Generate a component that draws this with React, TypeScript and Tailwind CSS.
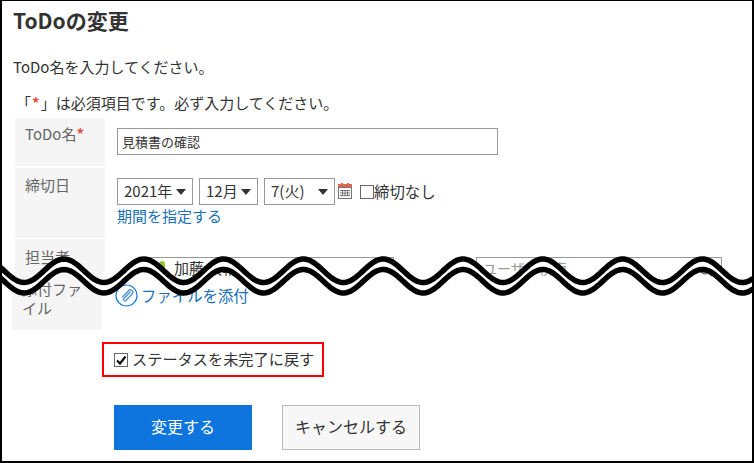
import React from "react";

const font = '"Noto Sans CJK JP", "Liberation Sans", sans-serif';

// one wave as a list of points, peaks every 79.8px starting from x=64
function wavePoints(peakY: number) {
    const amp = 11.75;
    const points: string[] = [];
    for (let x = -4; x <= 758; x += 2) {
        const y = peakY + amp - amp * Math.cos((2 * Math.PI * (x - 64)) / 79.8);
        points.push(`${x} ${y.toFixed(2)}`);
    }
    return points;
}

function WaveCut() {
    const upper = wavePoints(259);
    const lower = wavePoints(269.5);
    const band = [...upper, ...[...lower].reverse()];
    return (
        <svg className="absolute left-0 top-0" width="754" height="463" viewBox="0 0 754 463" fill="none">
            <path d={`M${band.join("L")}Z`} fill="#fff" />
            <path d={`M${upper.join("L")}`} stroke="#000" strokeWidth="5.5" />
            <path d={`M${lower.join("L")}`} stroke="#000" strokeWidth="5.5" />
        </svg>
    );
}

function Select({ label, width }: { label: string; width: string }) {
    return (
        <div className={`${width} flex h-[27px] items-center justify-between border border-[#999] px-[6px] text-[15px] text-[#333]`}>
            <span>{label}</span>
            <svg width="10" height="6" viewBox="0 0 10 6">
                <path d="M0 0h10L5 6z" fill="#333" />
            </svg>
        </div>
    );
}

function Label({ children, className }: { children: React.ReactNode; className: string }) {
    return (
        <div className={`w-[90px] shrink-0 bg-[#f5f5f5] text-[15px] text-[#666] ${className}`}>
            {children}
        </div>
    );
}

export default function App() {
    return (
        <div
            className="relative h-[463px] w-[754px] overflow-hidden border-t border-l-2 border-r-2 border-b-2 border-black bg-white"
            style={{ fontFamily: font }}
        >
            <h1 className="pl-[11px] pt-[6px] text-[21px] font-bold leading-[26px] text-[#333]">
                ToDoの変更
            </h1>
            <p className="mt-[24px] pl-[11px] text-[15px] leading-[20px] text-[#333]">
                ToDo名を入力してください。
            </p>
            <p className="mt-[16px] pl-[14px] text-[15px] leading-[20px] text-[#333]">
                「<span className="px-[1px] font-bold text-[#e5503c]">*</span>」は必須項目です。必ず入力してください。
            </p>

            <div className="mt-[5px] flex flex-col">
                {/* ToDo name */}
                <div className="ml-[13px] flex h-[48px]">
                    <Label className="px-[10px] pt-[6px] leading-[20px]">
                        ToDo名<span className="font-bold text-[#e5503c]">*</span>
                    </Label>
                    <div className="pl-[12px] pt-[10px]">
                        <div className="flex h-[27px] w-[381px] items-center border border-[#999] px-[4px] text-[13px] text-[#333]">
                            見積書の確認
                        </div>
                    </div>
                </div>

                {/* Deadline */}
                <div className="ml-[13px] mt-[2px] flex h-[70px]">
                    <Label className="px-[10px] pt-[7px] leading-[20px]">締切日</Label>
                    <div className="pl-[12px] pt-[10px]">
                        <div className="flex items-center">
                            <Select label="2021年" width="w-[76px]" />
                            <div className="w-[6px]" />
                            <Select label="12月" width="w-[59px]" />
                            <div className="w-[6px]" />
                            <Select label="7(火)" width="w-[71px]" />
                            <svg className="mb-[2px] ml-[3px]" width="14" height="16" viewBox="0 0 14 16">
                                <path d="M3 0h2v2H3zM9 0h2v2H9z" fill="#e8604c" />
                                <rect x="0" y="1" width="14" height="4" fill="#e8604c" />
                                <rect x="0.5" y="4.5" width="13" height="11" fill="#fff" stroke="#777" />
                                <path d="M2 7.5h10M2 10h10M2 12.5h10M4.5 7v6M7 7v6M9.5 7v6" stroke="#777" />
                            </svg>
                            <span className="ml-[8px] h-[14px] w-[14px] border border-[#666] bg-white" />
                            <span className="text-[15.4px] text-[#333]">締切なし</span>
                        </div>
                        <div className="mt-[1px] text-[15px] leading-[20px] text-[#1a6fb5]">期間を指定する</div>
                    </div>
                </div>

                {/* Assignee, cut off by the wave */}
                <div className="ml-[13px] mt-[1px] flex h-[33px]">
                    <Label className="px-[10px] pt-[8px] leading-[20px]">担当者</Label>
                    <div className="ml-[43px] mt-[18px] flex h-[15px] w-[246px] border border-b-0 border-[#999] pl-[10px] text-[15px] leading-[20px] text-[#333]">
                        <span className="mr-[9px] mt-[3px] h-[12px] w-[6px] rounded-sm bg-[#8ac832]" />
                        加藤 大輔
                    </div>
                    <div className="ml-[82px] mt-[18px] flex h-[15px] w-[246px] justify-between border border-b-0 border-[#999] pl-[6px] pr-[8px] text-[14px] leading-[20px] text-[#999]">
                        ユーザー検索
                        <svg className="mt-[5px]" width="14" height="14" viewBox="0 0 14 14" fill="none" stroke="#777" strokeWidth="2">
                            <circle cx="6" cy="6" r="4.5" />
                            <path d="M9.5 9.5 13 13" />
                        </svg>
                    </div>
                </div>

                {/* Attachment */}
                <div className="ml-[10px] flex h-[58px]">
                    <Label className="px-[10px] pt-[7px] leading-[19px]">添付ファイル</Label>
                    <div className="flex items-start pl-[13px] pt-[12px] text-[15.4px] leading-[22px] text-[#1a6fb5]">
                        <svg className="mr-[3px]" width="23" height="23" viewBox="0 0 23 23" fill="none">
                            <circle cx="11.5" cy="11.5" r="10.5" stroke="#1a7fe0" strokeWidth="1.2" />
                            <path
                                d="M15.5 7.5 9 14.5c-1.4 1.6.7 3.4 2 2l6-6.5c2.4-2.7-1.2-5.8-3.5-3.3L7 13.6"
                                stroke="#4a90d0"
                                strokeWidth="1.3"
                            />
                        </svg>
                        ファイルを添付
                    </div>
                </div>
            </div>

            {/* Status checkbox, highlighted */}
            <div className="ml-[100px] mt-[12px] flex h-[35px] w-[222px] items-center border-2 border-[#f00] pl-[10px] text-[15.2px] text-[#333]">
                <span className="mr-[4px] flex h-[14px] w-[14px] items-center justify-center border border-[#666] bg-white">
                    <svg width="12" height="12" viewBox="0 0 12 12" fill="none">
                        <path d="M2 6.5 5 9.5 10.5 2.5" stroke="#111" strokeWidth="2.2" />
                    </svg>
                </span>
                <span className="mb-[3px]">ステータスを未完了に戻す</span>
            </div>

            {/* Buttons */}
            <div className="ml-[112px] mt-[28px] flex gap-[30px]">
                <button className="h-[45px] w-[138px] bg-[#0f75de] pb-[3px] text-[16px] text-white">変更する</button>
                <button className="h-[45px] w-[138px] border border-[#bbb] bg-[#f7f7f7] pb-[3px] text-[16px] text-[#333]">
                    キャンセルする
                </button>
            </div>

            <div className="absolute -left-[2px] -top-[1px]">
                <WaveCut />
            </div>
        </div>
    );
}
